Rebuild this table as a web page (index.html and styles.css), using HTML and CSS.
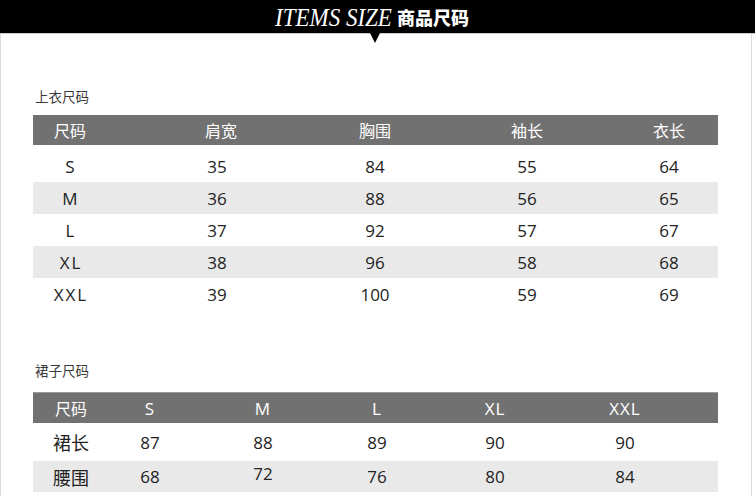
FILE: index.html
```html
<!DOCTYPE html>
<html lang="zh">
<head>
<meta charset="utf-8">
<title>ITEMS SIZE 商品尺码</title>
<link rel="stylesheet" href="styles.css">
</head>
<body>
<header class="topbar">
  <h1 class="title"><span class="title-en">ITEMS SIZE</span><span class="title-cn">商品尺码</span></h1>
</header>
<main class="page">
  <section class="block block-top">
    <h2 class="label">上衣尺码</h2>
    <div class="table t1">
      <div class="row head"><span>尺码</span><span>肩宽</span><span>胸围</span><span>袖长</span><span>衣长</span></div>
      <div class="row first"><span class="sz">S</span><span>35</span><span>84</span><span>55</span><span>64</span></div>
      <div class="row alt"><span class="sz">M</span><span>36</span><span>88</span><span>56</span><span>65</span></div>
      <div class="row"><span class="sz">L</span><span>37</span><span>92</span><span>57</span><span>67</span></div>
      <div class="row alt"><span class="sz">XL</span><span>38</span><span>96</span><span>58</span><span>68</span></div>
      <div class="row"><span class="sz">XXL</span><span>39</span><span>100</span><span>59</span><span>69</span></div>
    </div>
  </section>
  <section class="block block-skirt">
    <h2 class="label">裙子尺码</h2>
    <div class="table t2">
      <div class="row head"><span class="cn">尺码</span><span>S</span><span>M</span><span>L</span><span>XL</span><span>XXL</span></div>
      <div class="row r1"><span class="cn">裙长</span><span>87</span><span>88</span><span>89</span><span>90</span><span>90</span></div>
      <div class="row r2 alt"><span class="cn">腰围</span><span>68</span><span class="up">72</span><span>76</span><span>80</span><span>84</span></div>
    </div>
  </section>
</main>
</body>
</html>
```
FILE: styles.css
```css
* { box-sizing: border-box; }
html, body { margin: 0; padding: 0; background: #fff; }
body {
  width: 755px;
  height: 496px;
  overflow: hidden;
  font-family: "Open Sans", "Noto Sans CJK SC", sans-serif;
  color: #222;
}

.topbar {
  position: relative;
  height: 34px;
  background: #000;
  border-bottom: 1px solid #c8c8c8;
  display: flex;
  justify-content: center;
  align-items: center;
  padding-right: 11px;
}
.topbar::after {
  content: "";
  position: absolute;
  left: 370px;
  top: 33px;
  width: 0;
  height: 0;
  border-left: 5.5px solid transparent;
  border-right: 5.5px solid transparent;
  border-top: 10px solid #000;
}
.title {
  margin: 0;
  display: flex;
  align-items: center;
  gap: 9px;
  color: #fff;
  font-weight: normal;
  line-height: 1;
}
.title-en {
  display: inline-block;
  font-family: "Liberation Serif", "DejaVu Serif", serif;
  font-style: italic;
  font-size: 25px;
  width: 120px;
  white-space: nowrap;
  transform: scaleX(0.92);
  transform-origin: left center;
  margin-right: -7px;
  margin-top: 1px;
}
.title-cn {
  font-family: "Noto Sans CJK SC", sans-serif;
  font-weight: 900;
  font-size: 18px;
}

.page {
  width: 752px;
  min-height: 462px;
  border-left: 1px solid #dcdcdc;
  border-right: 1px solid #dcdcdc;
  padding-left: 32px;
}

.block-top { padding-top: 52px; }
.block-skirt { padding-top: 50px; }

.label {
  margin: 0 0 9px 2px;
  height: 20px;
  line-height: 20px;
  font-family: "Noto Sans CJK SC", sans-serif;
  font-size: 13.5px;
  font-weight: normal;
  color: #3a3a3a;
}
.block-skirt .label { margin-bottom: 12px; }

.table { width: 685px; }
.row {
  display: grid;
  align-items: center;
  text-align: center;
  font-size: 17px;
  height: 32px;
}
.row.head {
  background: #727171;
  color: #fff;
  font-size: 16px;
  height: 30px;
}
.row.alt { background: #e9e9e9; }

.t1 .row {
  grid-template-columns: 74px 220px 96px 208px 76px;
  padding-right: 11px;
}
.t1 .row.first { height: 37px; padding-top: 5px; }
.t1 .row.head span:nth-child(2) { padding-left: 8px; }
.sz { letter-spacing: 2px; padding-left: 2px; }

.t2 .row {
  grid-template-columns: 76px 82px 144px 84px 152px 108px;
  padding-right: 39px;
}
.t2 .row.head {
  height: 31px;
  font-size: 17px;
  border-top: 1px solid #9a9a9a;
  letter-spacing: 1px;
}
.t2 .row.head .cn { font-size: 16px; letter-spacing: 0; }
.t2 .row.r1 { height: 38px; }
.t2 .row.r2 { height: 31px; }
.t2 .cn { font-size: 18px; }
.up { position: relative; top: -3px; }
```
